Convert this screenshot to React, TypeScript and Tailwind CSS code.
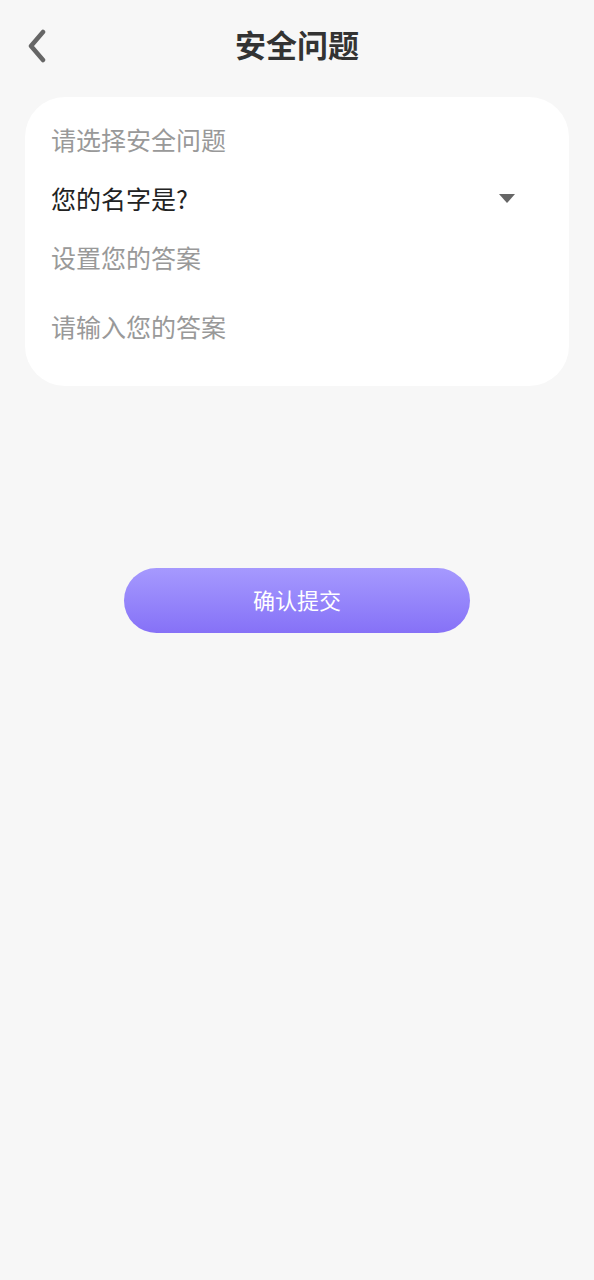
import { useState } from 'react'

const font = { fontFamily: '"Noto Sans CJK SC", "Noto Sans", sans-serif' }

export default function App() {
  const [answer, setAnswer] = useState('')

  return (
    <div className="min-h-[1280px] w-full bg-[#f7f7f7]" style={font}>
      <div className="relative flex h-[90px] items-center justify-center">
        <button type="button" className="absolute left-[24px] top-[27px] p-[2px]">
          <svg width="22" height="34" viewBox="0 0 22 34" fill="none">
            <path
              d="M17 3L5 17L17 31"
              stroke="#666666"
              strokeWidth="4.5"
              strokeLinecap="round"
              strokeLinejoin="round"
            />
          </svg>
        </button>
        <h1 className="pb-[4px] text-[31px] font-bold leading-none text-[#333333]">安全问题</h1>
      </div>

      <div className="mx-[25px] mt-[7px] rounded-[40px] bg-white pb-[31px] pl-[26px] pr-[26px] pt-[13px]">
        <div className="flex h-[59px] items-center text-[25px] text-[#999999]">请选择安全问题</div>
        <div className="flex h-[59px] items-center justify-between">
          <span className="text-[25px] text-[#222222]">您的名字是?</span>
          <svg width="16" height="9" viewBox="0 0 16 9" className="mr-[28px]">
            <path d="M0 0H16L8 9Z" fill="#666666" />
          </svg>
        </div>
        <div className="flex h-[59px] items-center text-[25px] text-[#999999]">设置您的答案</div>
        <input
          value={answer}
          onChange={(e) => setAnswer(e.target.value)}
          placeholder="请输入您的答案"
          className="mt-[9px] h-[59px] w-full bg-transparent text-[25px] text-[#222222] outline-none placeholder:text-[#999999]"
          style={font}
        />
      </div>

      <div className="mt-[182px] flex justify-center">
        <button
          type="button"
          className="h-[65px] w-[346px] rounded-full bg-gradient-to-b from-[#a699fe] to-[#8671f7] pb-[2px] text-[22px] text-white"
        >
          确认提交
        </button>
      </div>
    </div>
  )
}
